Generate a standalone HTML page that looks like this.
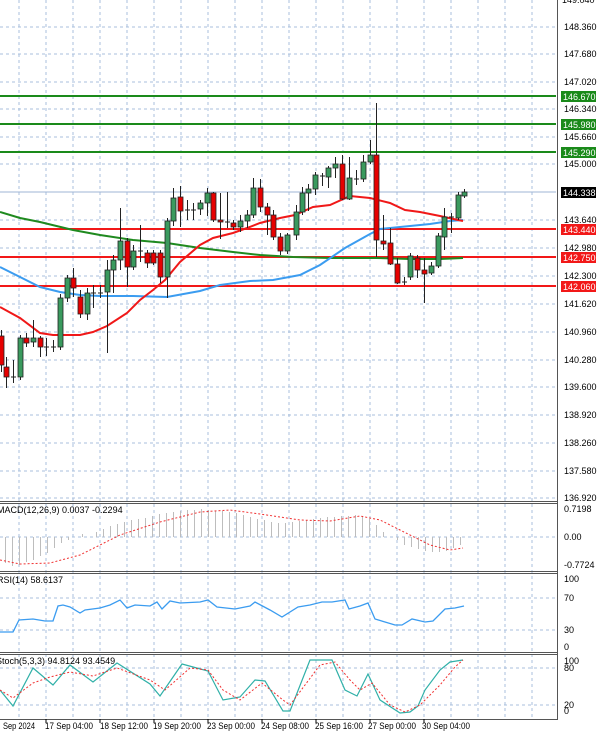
<!DOCTYPE html>
<html><head><meta charset="utf-8"><style>
html,body{margin:0;padding:0;background:#fff;width:600px;height:736px;overflow:hidden}
svg{display:block}
text{font-family:"Liberation Sans",sans-serif;font-size:9px;fill:#000}
.g{stroke:#a8bfdc;stroke-width:1;stroke-dasharray:3,3}
</style></head><body>
<svg width="600" height="736" viewBox="0 0 600 736" xmlns="http://www.w3.org/2000/svg">
<rect width="600" height="736" fill="#fff"/>
<g class="g">
<line x1="0" y1="27" x2="556" y2="27"/><line x1="0" y1="54" x2="556" y2="54"/><line x1="0" y1="82" x2="556" y2="82"/><line x1="0" y1="109" x2="556" y2="109"/><line x1="0" y1="137" x2="556" y2="137"/><line x1="0" y1="164" x2="556" y2="164"/><line x1="0" y1="192" x2="556" y2="192"/><line x1="0" y1="220" x2="556" y2="220"/><line x1="0" y1="248" x2="556" y2="248"/><line x1="0" y1="276" x2="556" y2="276"/><line x1="0" y1="304" x2="556" y2="304"/><line x1="0" y1="332" x2="556" y2="332"/><line x1="0" y1="360" x2="556" y2="360"/><line x1="0" y1="387" x2="556" y2="387"/><line x1="0" y1="415" x2="556" y2="415"/><line x1="0" y1="443" x2="556" y2="443"/><line x1="0" y1="471" x2="556" y2="471"/><line x1="0" y1="498" x2="556" y2="498"/>
<line x1="0" y1="537" x2="556" y2="537"/><line x1="0" y1="598" x2="556" y2="598"/><line x1="0" y1="630" x2="556" y2="630"/><line x1="0" y1="668" x2="556" y2="668"/><line x1="0" y1="705" x2="556" y2="705"/>
<line x1="19" y1="0" x2="19" y2="719"/><line x1="46" y1="0" x2="46" y2="719"/><line x1="73" y1="0" x2="73" y2="719"/><line x1="100" y1="0" x2="100" y2="719"/><line x1="127" y1="0" x2="127" y2="719"/><line x1="154" y1="0" x2="154" y2="719"/><line x1="181" y1="0" x2="181" y2="719"/><line x1="208" y1="0" x2="208" y2="719"/><line x1="235" y1="0" x2="235" y2="719"/><line x1="262" y1="0" x2="262" y2="719"/><line x1="289" y1="0" x2="289" y2="719"/><line x1="316" y1="0" x2="316" y2="719"/><line x1="343" y1="0" x2="343" y2="719"/><line x1="370" y1="0" x2="370" y2="719"/><line x1="397" y1="0" x2="397" y2="719"/><line x1="424" y1="0" x2="424" y2="719"/><line x1="451" y1="0" x2="451" y2="719"/><line x1="478" y1="0" x2="478" y2="719"/><line x1="505" y1="0" x2="505" y2="719"/><line x1="532" y1="0" x2="532" y2="719"/>
</g>
<g stroke-width="2">
<line x1="0" y1="96" x2="556" y2="96" stroke="#1a8a1a"/><line x1="0" y1="124" x2="556" y2="124" stroke="#1a8a1a"/><line x1="0" y1="152" x2="556" y2="152" stroke="#1a8a1a"/>
<line x1="0" y1="229" x2="556" y2="229" stroke="#f21818"/><line x1="0" y1="257" x2="556" y2="257" stroke="#f21818"/><line x1="0" y1="286" x2="556" y2="286" stroke="#f21818"/>
</g>
<line x1="0" y1="192" x2="556" y2="192" stroke="#9fb4d6" stroke-width="1"/>
<polyline fill="none" stroke="#1f8a1f" stroke-width="2" points="0,212 20,218 40,222 73,230 100,235 133,240 167,243 200,248 233,252 260,255 293,257 330,258 376,258 410,259 440,259 463,258"/>
<polyline fill="none" stroke="#3b9cf0" stroke-width="2" points="0,267 20,277 40,287 60,292 80,295 100,296 133,296 167,297 200,291 220,285 250,281 273,280 300,275 320,265 345,248 370,234 380,229 400,227 430,224 450,221 463,220"/>
<polyline fill="none" stroke="#f01818" stroke-width="2" points="0,307 20,318 40,333 53,335 80,335 93,332 107,326 127,313 140,300 153,290 165,280 180,262 200,245 213,238 233,233 247,228 260,223 280,218 295,215 313,207 330,205 350,196 370,198 390,203 405,210 420,212 440,216 458,220 463,221"/>
<g stroke="#222" stroke-width="1">
<line x1="1.5" y1="330" x2="1.5" y2="372"/><line x1="6.5" y1="357" x2="6.5" y2="388"/><line x1="13.5" y1="360" x2="13.5" y2="383"/><line x1="20.5" y1="335" x2="20.5" y2="380"/><line x1="26.5" y1="333" x2="26.5" y2="347"/><line x1="33.5" y1="320" x2="33.5" y2="347"/><line x1="40.5" y1="336" x2="40.5" y2="357"/><line x1="46.5" y1="338" x2="46.5" y2="356"/><line x1="53.5" y1="340" x2="53.5" y2="352"/><line x1="60.5" y1="294" x2="60.5" y2="350"/><line x1="67.5" y1="275" x2="67.5" y2="302"/><line x1="73.5" y1="268" x2="73.5" y2="297"/><line x1="80.5" y1="290" x2="80.5" y2="318"/><line x1="87.5" y1="288" x2="87.5" y2="320"/><line x1="93.5" y1="285" x2="93.5" y2="308"/><line x1="100.5" y1="285" x2="100.5" y2="298"/><line x1="107.5" y1="260" x2="107.5" y2="353"/><line x1="113.5" y1="255" x2="113.5" y2="293"/><line x1="120.5" y1="208" x2="120.5" y2="270"/><line x1="127.5" y1="238" x2="127.5" y2="287"/><line x1="133.5" y1="245" x2="133.5" y2="270"/><line x1="140.5" y1="225" x2="140.5" y2="262"/><line x1="147.5" y1="250" x2="147.5" y2="268"/><line x1="153.5" y1="250" x2="153.5" y2="265"/><line x1="160.5" y1="250" x2="160.5" y2="283"/><line x1="167.5" y1="218" x2="167.5" y2="298"/><line x1="173.5" y1="188" x2="173.5" y2="226"/><line x1="180.5" y1="186" x2="180.5" y2="227"/><line x1="187.5" y1="200" x2="187.5" y2="220"/><line x1="193.5" y1="203" x2="193.5" y2="220"/><line x1="200.5" y1="200" x2="200.5" y2="215"/><line x1="207.5" y1="188" x2="207.5" y2="216"/><line x1="213.5" y1="192" x2="213.5" y2="222"/><line x1="220.5" y1="193" x2="220.5" y2="239"/><line x1="227.5" y1="192" x2="227.5" y2="228"/><line x1="233.5" y1="220" x2="233.5" y2="230"/><line x1="240.5" y1="215" x2="240.5" y2="232"/><line x1="247.5" y1="210" x2="247.5" y2="228"/><line x1="253.5" y1="178" x2="253.5" y2="218"/><line x1="260.5" y1="179" x2="260.5" y2="212"/><line x1="267.5" y1="203" x2="267.5" y2="235"/><line x1="273.5" y1="210" x2="273.5" y2="240"/><line x1="280.5" y1="233" x2="280.5" y2="255"/><line x1="287.5" y1="233" x2="287.5" y2="254"/><line x1="296.5" y1="205" x2="296.5" y2="240"/><line x1="302.5" y1="187" x2="302.5" y2="215"/><line x1="308.5" y1="184" x2="308.5" y2="211"/><line x1="315.5" y1="172" x2="315.5" y2="195"/><line x1="322.5" y1="173" x2="322.5" y2="186"/><line x1="328.5" y1="166" x2="328.5" y2="188"/><line x1="335.5" y1="157" x2="335.5" y2="178"/><line x1="342.5" y1="155" x2="342.5" y2="200"/><line x1="349.5" y1="157" x2="349.5" y2="200"/><line x1="356.5" y1="170" x2="356.5" y2="185"/><line x1="363.5" y1="155" x2="363.5" y2="182"/><line x1="370.5" y1="140" x2="370.5" y2="164"/><line x1="376.5" y1="103" x2="376.5" y2="257"/><line x1="383.5" y1="215" x2="383.5" y2="250"/><line x1="390.5" y1="228" x2="390.5" y2="265"/><line x1="397.5" y1="258" x2="397.5" y2="284"/><line x1="404.5" y1="277" x2="404.5" y2="285"/><line x1="410.5" y1="253" x2="410.5" y2="280"/><line x1="417.5" y1="255" x2="417.5" y2="278"/><line x1="424.5" y1="258" x2="424.5" y2="303"/><line x1="431.5" y1="262" x2="431.5" y2="275"/><line x1="438.5" y1="233" x2="438.5" y2="268"/><line x1="444.5" y1="208" x2="444.5" y2="250"/><line x1="451.5" y1="213" x2="451.5" y2="233"/><line x1="458.5" y1="192" x2="458.5" y2="220"/><line x1="464.5" y1="189" x2="464.5" y2="198"/>
<line x1="11" y1="377" x2="16" y2="377"/><line x1="44" y1="347" x2="49" y2="347"/><line x1="51" y1="347" x2="56" y2="347"/><line x1="91" y1="293" x2="96" y2="293"/><line x1="98" y1="293" x2="103" y2="293"/><line x1="138" y1="251" x2="143" y2="251"/><line x1="185" y1="210" x2="190" y2="210"/><line x1="191" y1="210" x2="196" y2="210"/><line x1="225" y1="222" x2="230" y2="222"/><line x1="320" y1="176" x2="325" y2="176"/><line x1="354" y1="179" x2="359" y2="179"/><line x1="402" y1="282" x2="407" y2="282"/><line x1="449" y1="217" x2="454" y2="217"/>
</g>
<g stroke="#222" stroke-width="0.8" fill="#e60000">
<rect x="-1" y="336" width="5" height="29"/><rect x="4" y="367" width="5" height="10"/><rect x="24" y="338" width="5" height="5"/><rect x="38" y="338" width="5" height="9"/><rect x="71" y="278" width="5" height="10"/><rect x="78" y="297" width="5" height="17"/><rect x="125" y="241" width="5" height="26"/><rect x="145" y="253" width="5" height="10"/><rect x="151" y="253" width="5" height="10"/><rect x="158" y="253" width="5" height="24"/><rect x="178" y="197" width="5" height="14"/><rect x="211" y="193" width="5" height="27"/><rect x="218" y="220" width="5" height="2"/><rect x="231" y="223" width="5" height="4"/><rect x="258" y="188" width="5" height="19"/><rect x="265" y="207" width="5" height="8"/><rect x="271" y="215" width="5" height="22"/><rect x="278" y="237" width="5" height="14"/><rect x="340" y="164" width="5" height="35"/><rect x="374" y="155" width="5" height="85"/><rect x="381" y="241" width="5" height="3"/><rect x="388" y="243" width="5" height="21"/><rect x="395" y="264" width="5" height="19"/><rect x="415" y="258" width="5" height="12"/><rect x="422" y="270" width="5" height="4"/>
</g>
<g stroke="#222" stroke-width="0.8" fill="#3a9a5e">
<rect x="18" y="338" width="5" height="39"/><rect x="31" y="338" width="5" height="4"/><rect x="58" y="298" width="5" height="49"/><rect x="65" y="278" width="5" height="20"/><rect x="85" y="293" width="5" height="21"/><rect x="105" y="270" width="5" height="22"/><rect x="111" y="260" width="5" height="10"/><rect x="118" y="241" width="5" height="19"/><rect x="131" y="251" width="5" height="16"/><rect x="165" y="221" width="5" height="56"/><rect x="171" y="198" width="5" height="23"/><rect x="198" y="203" width="5" height="6"/><rect x="205" y="193" width="5" height="10"/><rect x="238" y="221" width="5" height="6"/><rect x="245" y="215" width="5" height="6"/><rect x="251" y="188" width="5" height="27"/><rect x="285" y="235" width="5" height="16"/><rect x="294" y="212" width="5" height="23"/><rect x="300" y="193" width="5" height="19"/><rect x="306" y="189" width="5" height="4"/><rect x="313" y="175" width="5" height="14"/><rect x="326" y="168" width="5" height="9"/><rect x="333" y="164" width="5" height="4"/><rect x="347" y="178" width="5" height="21"/><rect x="361" y="162" width="5" height="17"/><rect x="368" y="155" width="5" height="7"/><rect x="408" y="256" width="5" height="21"/><rect x="429" y="266" width="5" height="7"/><rect x="436" y="236" width="5" height="30"/><rect x="442" y="217" width="5" height="20"/><rect x="456" y="195" width="5" height="23"/><rect x="462" y="192" width="5" height="4"/>
</g>
<g stroke="#bdbdbd" stroke-width="1">
<line x1="5.5" y1="537" x2="5.5" y2="563"/><line x1="12.5" y1="537" x2="12.5" y2="566"/><line x1="19.5" y1="537" x2="19.5" y2="565"/><line x1="26.5" y1="537" x2="26.5" y2="562"/><line x1="33.5" y1="537" x2="33.5" y2="560"/><line x1="40.5" y1="537" x2="40.5" y2="556"/><line x1="47.5" y1="537" x2="47.5" y2="553"/><line x1="54.5" y1="537" x2="54.5" y2="548"/><line x1="61.5" y1="537" x2="61.5" y2="543"/><line x1="68.5" y1="537" x2="68.5" y2="540"/><line x1="82.5" y1="537" x2="82.5" y2="534"/><line x1="96.5" y1="537" x2="96.5" y2="532"/><line x1="103.5" y1="537" x2="103.5" y2="529"/><line x1="110.5" y1="537" x2="110.5" y2="526"/><line x1="117.5" y1="537" x2="117.5" y2="524"/><line x1="124.5" y1="537" x2="124.5" y2="522"/><line x1="131.5" y1="537" x2="131.5" y2="520"/><line x1="138.5" y1="537" x2="138.5" y2="519"/><line x1="145.5" y1="537" x2="145.5" y2="518"/><line x1="152.5" y1="537" x2="152.5" y2="516"/><line x1="159.5" y1="537" x2="159.5" y2="514"/><line x1="166.5" y1="537" x2="166.5" y2="513"/><line x1="173.5" y1="537" x2="173.5" y2="512"/><line x1="180.5" y1="537" x2="180.5" y2="511"/><line x1="187.5" y1="537" x2="187.5" y2="510"/><line x1="194.5" y1="537" x2="194.5" y2="510"/><line x1="201.5" y1="537" x2="201.5" y2="509"/><line x1="208.5" y1="537" x2="208.5" y2="510"/><line x1="215.5" y1="537" x2="215.5" y2="511"/><line x1="222.5" y1="537" x2="222.5" y2="511"/><line x1="229.5" y1="537" x2="229.5" y2="512"/><line x1="236.5" y1="537" x2="236.5" y2="513"/><line x1="243.5" y1="537" x2="243.5" y2="515"/><line x1="250.5" y1="537" x2="250.5" y2="517"/><line x1="257.5" y1="537" x2="257.5" y2="519"/><line x1="264.5" y1="537" x2="264.5" y2="520"/><line x1="271.5" y1="537" x2="271.5" y2="522"/><line x1="278.5" y1="537" x2="278.5" y2="523"/><line x1="285.5" y1="537" x2="285.5" y2="523"/><line x1="292.5" y1="537" x2="292.5" y2="522"/><line x1="299.5" y1="537" x2="299.5" y2="521"/><line x1="306.5" y1="537" x2="306.5" y2="520"/><line x1="313.5" y1="537" x2="313.5" y2="519"/><line x1="320.5" y1="537" x2="320.5" y2="518"/><line x1="327.5" y1="537" x2="327.5" y2="517"/><line x1="334.5" y1="537" x2="334.5" y2="517"/><line x1="341.5" y1="537" x2="341.5" y2="516"/><line x1="348.5" y1="537" x2="348.5" y2="516"/><line x1="355.5" y1="537" x2="355.5" y2="515"/><line x1="362.5" y1="537" x2="362.5" y2="516"/><line x1="369.5" y1="537" x2="369.5" y2="519"/><line x1="376.5" y1="537" x2="376.5" y2="525"/><line x1="383.5" y1="537" x2="383.5" y2="532"/><line x1="397.5" y1="537" x2="397.5" y2="540"/><line x1="404.5" y1="537" x2="404.5" y2="545"/><line x1="411.5" y1="537" x2="411.5" y2="547"/><line x1="418.5" y1="537" x2="418.5" y2="549"/><line x1="425.5" y1="537" x2="425.5" y2="551"/><line x1="432.5" y1="537" x2="432.5" y2="552"/><line x1="439.5" y1="537" x2="439.5" y2="552"/><line x1="446.5" y1="537" x2="446.5" y2="551"/><line x1="453.5" y1="537" x2="453.5" y2="548"/><line x1="460.5" y1="537" x2="460.5" y2="545"/>
</g>
<polyline fill="none" stroke="#f03030" stroke-width="1" stroke-dasharray="2,2" points="0,560 20,564 50,563 80,555 120,535 160,522 200,512 230,510 260,514 300,520 330,521 360,516 380,520 400,530 430,545 450,550 463,548"/>
<polyline fill="none" stroke="#3b9cf0" stroke-width="1.3" points="0,632 13,632 19,620 33,619 45,621 53,621 58,606 63,605 70,607 80,613 85,610 100,608 110,605 120,600 127,608 135,605 150,606 157,602 162,609 170,601 180,603 200,602 208,600 217,607 235,609 250,606 255,602 270,610 282,617 298,607 310,605 322,602 332,602 345,600 349,609 360,606 368,603 375,619 385,622 395,625 402,625 412,619 425,622 433,621 445,609 455,608 464,606"/>
<polyline fill="none" stroke="#30b0a8" stroke-width="1.2" points="0,690 13,706 33,668 53,685 70,665 93,682 117,663 150,684 160,696 182,664 208,671 223,700 240,697 255,680 265,681 283,711 290,711 310,660 332,660 345,690 357,696 368,674 380,700 400,713 410,712 418,706 425,690 440,670 450,662 463,660"/>
<polyline fill="none" stroke="#f03030" stroke-width="1" stroke-dasharray="2,2" points="0,690 13,698 33,683 50,677 70,672 93,676 117,668 150,680 165,690 190,668 208,670 223,690 240,700 262,683 283,700 290,705 320,665 335,662 350,680 360,690 372,683 390,705 405,712 420,705 440,685 455,667 463,660"/>
<g stroke="#555" stroke-width="1">
<line x1="0" y1="501.5" x2="558" y2="501.5"/><line x1="0" y1="503.5" x2="558" y2="503.5"/>
<line x1="0" y1="571.5" x2="558" y2="571.5"/><line x1="0" y1="573.5" x2="558" y2="573.5"/>
<line x1="0" y1="652.5" x2="558" y2="652.5"/><line x1="0" y1="654.5" x2="558" y2="654.5"/>
<line x1="0" y1="719.5" x2="558" y2="719.5"/>
<line x1="557.5" y1="0" x2="557.5" y2="720"/>
</g>
<text x="562" y="3">149.040</text>
<text x="564" y="30">148.360</text><text x="564" y="57">147.680</text><text x="564" y="85">147.020</text><text x="564" y="112">146.340</text><text x="564" y="140">145.660</text><text x="564" y="167">145.000</text><text x="564" y="223">143.640</text><text x="564" y="251">142.980</text><text x="564" y="279">142.300</text><text x="564" y="307">141.620</text><text x="564" y="335">140.960</text><text x="564" y="363">140.280</text><text x="564" y="390">139.600</text><text x="564" y="418">138.920</text><text x="564" y="446">138.260</text><text x="564" y="474">137.580</text><text x="564" y="501">136.920</text>
<rect x="561" y="91" width="35" height="11" fill="#1a8a1a"/><text x="563" y="100" style="fill:#fff">146.670</text>
<rect x="561" y="119" width="35" height="11" fill="#1a8a1a"/><text x="563" y="128" style="fill:#fff">145.980</text>
<rect x="561" y="147" width="35" height="11" fill="#1a8a1a"/><text x="563" y="156" style="fill:#fff">145.290</text>
<rect x="561" y="187" width="35" height="11" fill="#000"/><text x="563" y="196" style="fill:#fff">144.338</text>
<rect x="561" y="224" width="35" height="11" fill="#f21818"/><text x="563" y="233" style="fill:#fff">143.440</text>
<rect x="561" y="252" width="35" height="11" fill="#f21818"/><text x="563" y="261" style="fill:#fff">142.750</text>
<rect x="561" y="281" width="35" height="11" fill="#f21818"/><text x="563" y="290" style="fill:#fff">142.060</text>
<text x="564" y="512">0.7198</text><text x="564" y="540">0.00</text><text x="564" y="568">-0.7724</text>
<text x="564" y="582">100</text><text x="564" y="601">70</text><text x="564" y="633">30</text><text x="564" y="650">0</text>
<text x="564" y="664">100</text><text x="564" y="671">80</text><text x="564" y="708">20</text><text x="564" y="714">0</text>
<text x="-3" y="513">MACD(12,26,9) 0.0037 -0.2294</text>
<text x="-3" y="583">RSI(14) 58.6137</text>
<text x="-4" y="664">Stoch(5,3,3) 94.8124 93.4549</text>
<text x="3" y="729" textLength="32" lengthAdjust="spacingAndGlyphs">Sep 2024</text><text x="45" y="729" textLength="48" lengthAdjust="spacingAndGlyphs">17 Sep 04:00</text><text x="100" y="729" textLength="48" lengthAdjust="spacingAndGlyphs">18 Sep 12:00</text><text x="153" y="729" textLength="48" lengthAdjust="spacingAndGlyphs">19 Sep 20:00</text><text x="207" y="729" textLength="48" lengthAdjust="spacingAndGlyphs">23 Sep 00:00</text><text x="261" y="729" textLength="48" lengthAdjust="spacingAndGlyphs">24 Sep 08:00</text><text x="315" y="729" textLength="48" lengthAdjust="spacingAndGlyphs">25 Sep 16:00</text><text x="368" y="729" textLength="48" lengthAdjust="spacingAndGlyphs">27 Sep 00:00</text><text x="422" y="729" textLength="48" lengthAdjust="spacingAndGlyphs">30 Sep 04:00</text>
<g stroke="#000"><line x1="46" y1="719" x2="46" y2="723"/><line x1="100" y1="719" x2="100" y2="723"/><line x1="154" y1="719" x2="154" y2="723"/><line x1="208" y1="719" x2="208" y2="723"/><line x1="262" y1="719" x2="262" y2="723"/><line x1="316" y1="719" x2="316" y2="723"/><line x1="370" y1="719" x2="370" y2="723"/><line x1="424" y1="719" x2="424" y2="723"/></g>
</svg>
</body></html>
